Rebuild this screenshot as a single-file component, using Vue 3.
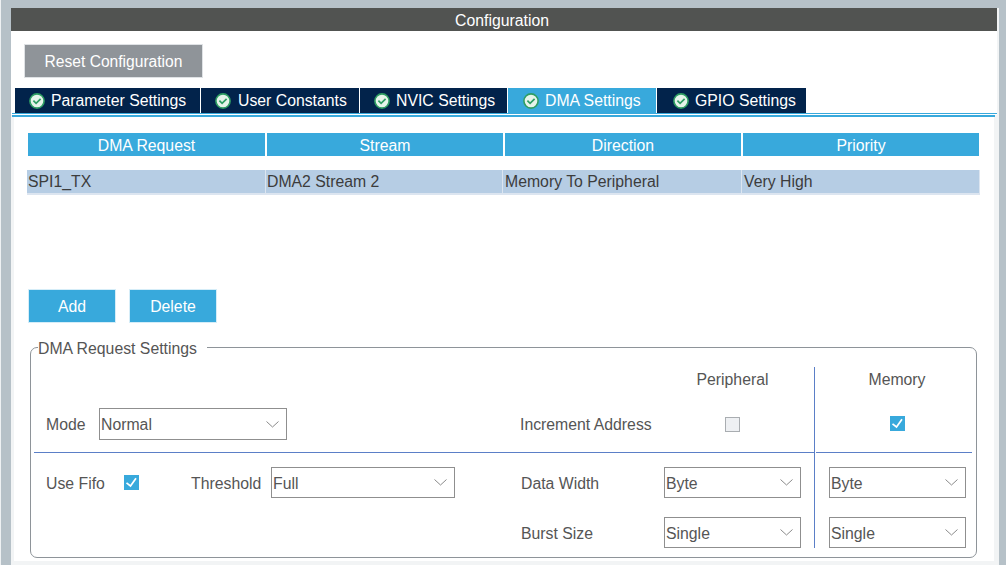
<script setup>
const tabs = [
  { label: 'Parameter Settings', width: 185, pad: 13, gap: 5 },
  { label: 'User Constants', width: 158, pad: 13, gap: 6 },
  { label: 'NVIC Settings', width: 147, pad: 13, gap: 5 },
  { label: 'DMA Settings', width: 148, pad: 14, gap: 5, active: true },
  { label: 'GPIO Settings', width: 149, pad: 15, gap: 5 }
]
const columns = ['DMA Request', 'Stream', 'Direction', 'Priority']
const row = ['SPI1_TX', 'DMA2 Stream 2', 'Memory To Peripheral', 'Very High']
</script>

<template>
  <div class="screen">
    <div class="window">
      <div class="title">Configuration</div>
      <div class="upper">
        <button class="reset">Reset Configuration</button>
        <div class="tabs">
          <div
            v-for="tab in tabs"
            :key="tab.label"
            class="tab"
            :class="{ active: tab.active }"
            :style="{ width: tab.width + 'px', paddingLeft: tab.pad + 'px', gap: tab.gap + 'px' }"
          >
            <svg class="ok" width="18" height="18" viewBox="0 0 18 18">
              <circle cx="9" cy="9" r="7.1" fill="#e6f4ea" stroke="#2f9e63" stroke-width="1.6" />
              <path d="M5.4 8.6 L8.1 11.3 L12.6 6.8" fill="none" stroke="#2f9e63" stroke-width="1.7" />
            </svg>
            <span>{{ tab.label }}</span>
          </div>
        </div>
        <div class="thin-line"></div>
      </div>
      <div class="body">
        <div class="thick-line"></div>
        <div class="thead">
          <div v-for="c in columns" :key="c" class="th">{{ c }}</div>
        </div>
        <div class="tr">
          <div v-for="c in row" :key="c" class="td">{{ c }}</div>
        </div>
        <div class="actions">
          <button class="action">Add</button>
          <button class="action">Delete</button>
        </div>
        <fieldset class="settings">
          <legend>DMA Request Settings</legend>
          <div class="split">
            <div class="main-col">
              <div class="grid top">
                <div class="head cell-c">Peripheral</div>
                <div class="group mode">
                  <span class="label mode-label">Mode</span>
                  <div class="select tall mode-select">
                    <span>Normal</span>
                    <svg width="13" height="7" viewBox="0 0 13 7"><path d="M0.5 0.5 L6.5 6 L12.5 0.5" fill="none" stroke="#8a8a8a" /></svg>
                  </div>
                </div>
                <span class="label inc">Increment Address</span>
                <div class="check-cell"><span class="check off"></span></div>
              </div>
              <div class="grid bottom">
                <div class="group fifo">
                  <span class="label fifo-label">Use Fifo</span>
                  <span class="check on">
                    <svg width="15" height="15" viewBox="0 0 15 15"><path d="M2.5 7.8 L6.5 11 L12 3.2" fill="none" stroke="#fff" stroke-width="1.7" /></svg>
                  </span>
                  <span class="label thr-label">Threshold</span>
                  <div class="select thr-select">
                    <span>Full</span>
                    <svg width="13" height="7" viewBox="0 0 13 7"><path d="M0.5 0.5 L6.5 6 L12.5 0.5" fill="none" stroke="#8a8a8a" /></svg>
                  </div>
                </div>
                <span class="label">Data Width</span>
                <div class="select">
                  <span>Byte</span>
                  <svg width="13" height="7" viewBox="0 0 13 7"><path d="M0.5 0.5 L6.5 6 L12.5 0.5" fill="none" stroke="#8a8a8a" /></svg>
                </div>
                <span class="label burst">Burst Size</span>
                <div class="select">
                  <span>Single</span>
                  <svg width="13" height="7" viewBox="0 0 13 7"><path d="M0.5 0.5 L6.5 6 L12.5 0.5" fill="none" stroke="#8a8a8a" /></svg>
                </div>
              </div>
            </div>
            <div class="side-col">
              <div class="side-top">
                <div class="head">Memory</div>
                <div class="side-check">
                  <span class="check on">
                    <svg width="15" height="15" viewBox="0 0 15 15"><path d="M2.5 7.8 L6.5 11 L12 3.2" fill="none" stroke="#fff" stroke-width="1.7" /></svg>
                  </span>
                </div>
              </div>
              <div class="side-bottom">
                <div class="select">
                  <span>Byte</span>
                  <svg width="13" height="7" viewBox="0 0 13 7"><path d="M0.5 0.5 L6.5 6 L12.5 0.5" fill="none" stroke="#8a8a8a" /></svg>
                </div>
                <div class="select">
                  <span>Single</span>
                  <svg width="13" height="7" viewBox="0 0 13 7"><path d="M0.5 0.5 L6.5 6 L12.5 0.5" fill="none" stroke="#8a8a8a" /></svg>
                </div>
              </div>
            </div>
          </div>
        </fieldset>
      </div>
    </div>
  </div>
</template>

<style>
html, body { margin: 0; padding: 0; overflow: hidden; }
</style>

<style scoped>
.screen {
  width: 1006px;
  height: 565px;
  box-sizing: border-box;
  padding: 8px 0 0 10px;
  background: #b6c1c8;
  border-left: 1px solid #eef1f3;
  overflow: hidden;
  font-family: "Liberation Sans", Arial, sans-serif;
  font-size: 15.8px;
  color: #555;
}
.window {
  width: 988px;
  height: 557px;
  background: #f2f4f5;
}
.title {
  width: 986px;
  height: 23px;
  box-sizing: border-box;
  padding-right: 4px;
  line-height: 25px;
  background: #515351;
  color: #fff;
  text-align: center;
}
.upper {
  background: #fff;
  width: 986px;
  height: 84px;
  box-sizing: border-box;
  padding-top: 13px;
}
.reset {
  display: block;
  width: 179px;
  height: 34px;
  margin: 0 0 0 13px;
  padding: 2px 0 0;
  font-family: inherit;
  font-size: 15.6px;
  color: #fff;
  background: #8f9499;
  border: 1px solid #dfe2e5;
}
.tabs {
  display: flex;
  margin: 10px 0 0 4px;
}
.tab {
  height: 25px;
  box-sizing: border-box;
  display: flex;
  align-items: center;
  margin-right: 1px;
  background: #02234b;
  color: #fff;
  flex: none;
}
.tab.active { background: #38a9dc; }
.ok { flex: none; }
.thin-line {
  height: 1px;
  margin: 0 0 0 1px;
  background: #38a9dc;
}
.body {
  width: 980px;
  height: 446px;
  margin-left: 3px;
  background: #fff;
}
.thick-line {
  height: 2px;
  background: #38a9dc;
  margin-left: -2px;
  margin-right: -1px;
}
.thead {
  display: grid;
  grid-template-columns: 237px 236px 236px 236px;
  gap: 2px;
  margin: 16px 0 0 14px;
  width: 951px;
}
.th {
  height: 23px;
  line-height: 26px;
  background: #38a9dc;
  color: #fff;
  text-align: center;
}
.tr {
  display: grid;
  grid-template-columns: 238px 236px 238px 237px;
  gap: 1px;
  width: 953px;
  box-sizing: border-box;
  margin: 14px 0 0 13px;
  padding: 0 1px 2px 0;
  background: #dce5f0;
}
.td {
  height: 23px;
  line-height: 24px;
  padding-left: 1px;
  background: #b6cde4;
  color: #3c3c3c;
}
.td:nth-child(n+3) { padding-left: 2px; }
.actions {
  display: flex;
  gap: 13px;
  margin: 94px 0 0 14px;
}
.action {
  width: 88px;
  height: 34px;
  padding: 1px 0 0;
  font: inherit;
  color: #fff;
  background: #38a9dc;
  border: 1px solid #d5edf8;
}
.settings {
  width: 947px;
  height: 219px;
  box-sizing: border-box;
  margin: 16px 0 0 16px;
  padding: 11px 4px 0 3px;
  border: 1px solid #8e9499;
  border-radius: 7px;
  min-width: 0;
}
legend {
  padding: 0 10px 0 0;
  margin-left: 4px;
  color: #555;
  line-height: 20px;
  height: 17px;
}
.split { display: flex; }
.main-col { width: 780px; flex: none; }
.grid {
  display: grid;
  grid-template-columns: 487px 143px 137px 13px;
}
.top {
  height: 86px;
  box-sizing: border-box;
  border-bottom: 1px solid #5b7fc7;
  grid-template-rows: 24px 1fr;
  align-items: center;
}
.head {
  text-align: center;
  line-height: 24px;
  padding-top: 1px;
}
.cell-c { grid-column: 3; grid-row: 1; }
.group { display: flex; align-items: center; }
.mode { grid-column: 1; grid-row: 2; padding-bottom: 12px; align-self: end; }
.mode-label { margin-left: 12px; width: 53px; flex: none; }
.mode-select { width: 188px; }
.inc { grid-column: 2; grid-row: 2; align-self: end; margin: 0 0 18px -1px; }
.check-cell { grid-column: 3; grid-row: 2; align-self: end; display: flex; justify-content: center; padding-bottom: 20px; }
.label { line-height: 18px; padding-top: 2px; white-space: nowrap; }
.select {
  height: 31px;
  box-sizing: border-box;
  border: 1px solid #8f8f8f;
  display: flex;
  align-items: center;
  justify-content: space-between;
  padding: 0 7px 0 1px;
  background: #fff;
}
.select span { padding-top: 2px; }
.select.tall { height: 32px; }
.bottom {
  padding-top: 14px;
  row-gap: 19px;
  align-items: center;
}
.burst { grid-column: 2; }
.fifo-label { margin-left: 12px; width: 78px; flex: none; }
.thr-label { margin-left: 52px; width: 80px; flex: none; }
.thr-select { width: 184px; }
.check {
  width: 15px;
  height: 15px;
  box-sizing: border-box;
  display: block;
  flex: none;
}
.check svg { display: block; }
.check.on { background: #38a9dc; }
.check.off { background: #eef0f3; border: 1px solid #a9adb1; }
.side-col {
  width: 158px;
  flex: none;
  border-left: 1px solid #5b7fc7;
  box-sizing: border-box;
}
.side-top {
  height: 86px;
  box-sizing: border-box;
  margin-left: 1px;
  padding: 0 7px 0 13px;
  border-bottom: 1px solid #5b7fc7;
  width: 156px;
}
.side-check {
  display: flex;
  justify-content: center;
  padding-top: 24px;
}
.side-bottom {
  display: grid;
  grid-template-columns: 137px;
  row-gap: 19px;
  padding: 14px 0 0 14px;
}
</style>
